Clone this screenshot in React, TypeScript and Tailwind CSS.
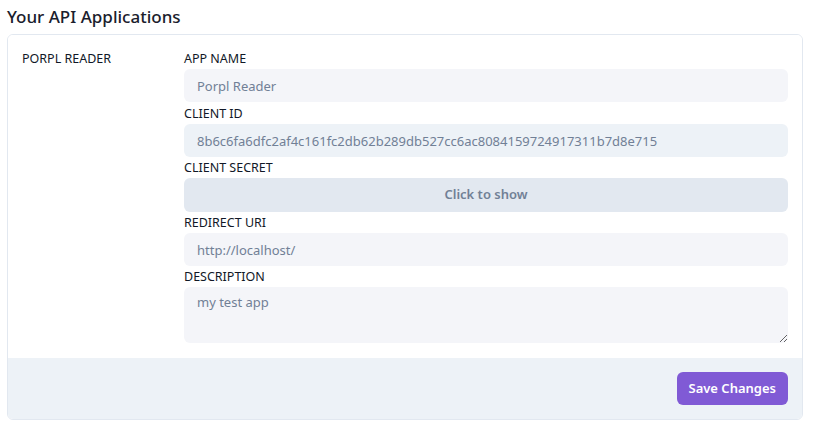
import React from 'react'

const font = { fontFamily: '"Segoe UI", "Noto Sans", "Open Sans", sans-serif' }

function Field({ label, children }: { label: string; children: React.ReactNode }) {
  return (
    <div className="flex flex-col">
      <label className="text-[12.5px] leading-[18px] font-normal uppercase text-[#111827] mb-[1px]">{label}</label>
      {children}
    </div>
  )
}

export default function App() {
  return (
    <div className="bg-white w-[813px] h-[430px] pl-[7px] pr-[10px] pt-[4px]" style={font}>
      <h2 className="text-[17px] leading-[26px] font-medium text-[#1a202c] mb-[4px]">Your API Applications</h2>
      <div className="border border-[#e2e8f0] rounded-md overflow-hidden">
        <div className="flex px-[14px] pt-[15px] pb-[15px] bg-white">
          <div className="w-[162px] shrink-0 text-[12.5px] leading-[18px] font-normal uppercase text-[#111827]">Porpl Reader</div>
          <div className="flex-1 flex flex-col gap-[2px]">
            <Field label="App Name">
              <input
                className="h-[33px] rounded-md bg-[#f4f5f9] px-[13px] text-[13px] text-[#718096] outline-none mb-[1px]"
                defaultValue="Porpl Reader"
              />
            </Field>
            <Field label="Client ID">
              <input
                className="h-[33px] rounded-md bg-[#edf2f7] px-[13px] text-[13px] text-[#718096] outline-none"
                defaultValue="8b6c6fa6dfc2af4c161fc2db62b289db527cc6ac8084159724917311b7d8e715"
                readOnly
              />
            </Field>
            <Field label="Client Secret">
              <button className="h-[34px] rounded-md bg-[#e2e8f0] text-[13px] font-semibold text-[#718096]">Click to show</button>
            </Field>
            <Field label="Redirect URI">
              <input
                className="h-[33px] rounded-md bg-[#f4f5f9] px-[13px] text-[13px] text-[#718096] outline-none"
                defaultValue="http://localhost/"
              />
            </Field>
            <Field label="Description">
              <textarea
                className="h-[56px] rounded-md bg-[#f4f5f9] px-[13px] py-[6px] text-[13px] text-[#718096] outline-none"
                defaultValue="my test app"
              />
            </Field>
          </div>
        </div>
        <div className="bg-[#edf2f7] flex justify-end px-[14px] pt-[14px] pb-[14px]">
          <button className="h-[33px] px-[12px] rounded-md bg-[#805ad5] text-white text-[13px] font-semibold">Save Changes</button>
        </div>
      </div>
    </div>
  )
}
